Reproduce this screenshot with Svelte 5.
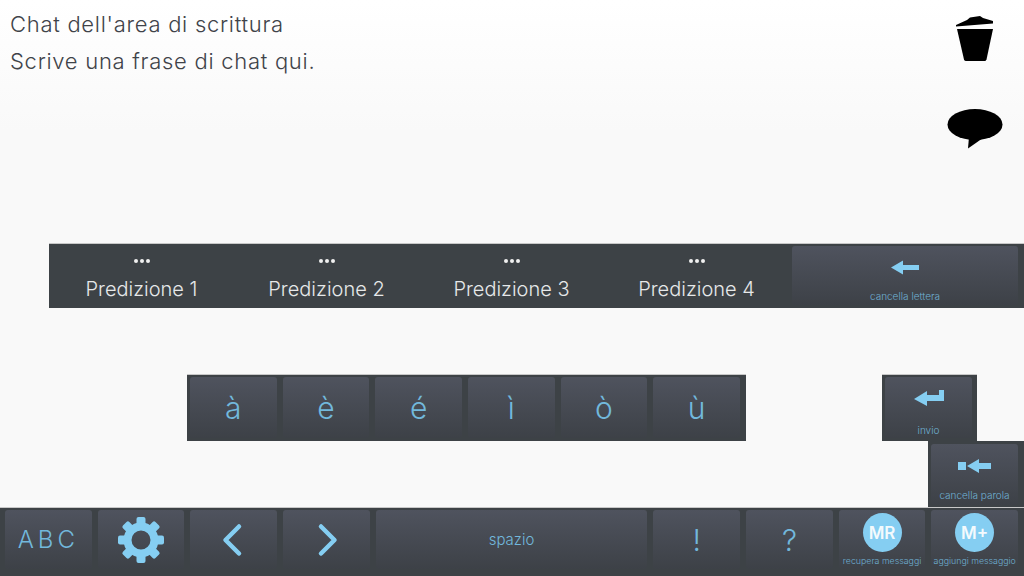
<script>
  const predictions = ['Predizione 1', 'Predizione 2', 'Predizione 3', 'Predizione 4'];
  const accents = ['à', 'è', 'é', 'ì', 'ò', 'ù'];
  const teeth = [0, 45, 90, 135, 180, 225, 270, 315];
</script>

<div class="page">
  <header class="top">
    <div class="message">
      <p>Chat dell'area di scrittura</p>
      <p>Scrive una frase di chat qui.</p>
    </div>
    <div class="actions">
      <svg width="38" height="48" viewBox="1 0 38 48" aria-label="cestino">
        <path d="M1 10 L12 5 L15 2.500 L25 1 L28 3 L38 6 L38 8.500 L1 11.500 Z" />
        <path d="M2 14 L38 14 L31.500 44.500 Q31 46 29.500 46 L11 46 Q9.500 46 9 44.500 Z" />
      </svg>
      <svg class="bubble" width="56" height="40" viewBox="0 0 56 40" aria-label="chat">
        <ellipse cx="28" cy="15.500" rx="27.500" ry="15.500" />
        <path d="M22 28 L21 39.500 L36 29 Z" />
      </svg>
    </div>
  </header>

  <section class="predictions">
    {#each predictions as label}
      <div class="prediction">
        <div class="dots"><i></i><i></i><i></i></div>
        <span>{label}</span>
      </div>
    {/each}
    <button class="key backspace">
      <svg width="30" height="16" viewBox="0 0 30 16">
        <path d="M1 7.500 L13 0.500 L13 5 L29 5 L29 10 L13 10 L13 14.500 Z" />
      </svg>
      <small>cancella lettera</small>
    </button>
  </section>

  <section class="middle">
    <div class="accents">
      {#each accents as letter}
        <button class="key letter">{letter}</button>
      {/each}
    </div>
    <div class="enter">
      <button class="key labelled">
        <svg width="30" height="17" viewBox="0 0 30 17">
          <path d="M0 9 L13 1 L13 5 L25 5 L25 0 L30 0 L30 11 L13 11 L13 16 Z" />
        </svg>
        <small>invio</small>
      </button>
    </div>
  </section>

  <section class="word">
    <button class="key labelled">
      <svg width="34" height="16" viewBox="0 0 34 16">
        <rect x="0" y="4" width="8" height="8" />
        <path d="M9 8 L21 1 L21 5 L33 5 L33 11 L21 11 L21 15 Z" />
      </svg>
      <small>cancella parola</small>
    </button>
  </section>

  <nav class="bottom">
    <button class="key letter abc">ABC</button>
    <button class="key">
      <svg width="48" height="48" viewBox="-24 -24 48 48" aria-label="impostazioni">
        {#each teeth as angle}
          <rect x="-4.500" y="-23" width="9" height="12" rx="2" transform="rotate({angle})" />
        {/each}
        <circle r="13.500" fill="none" stroke="#85cef2" stroke-width="8" />
      </svg>
    </button>
    <button class="key">
      <svg width="24" height="34" viewBox="0 0 24 34" aria-label="indietro">
        <path class="chevron" d="M17 3.500 L3.500 17 L17 30.500" />
      </svg>
    </button>
    <button class="key">
      <svg width="24" height="34" viewBox="0 0 24 34" aria-label="avanti">
        <path class="chevron" d="M7 3.500 L20.500 17 L7 30.500" />
      </svg>
    </button>
    <button class="key space">spazio</button>
    <button class="key letter">!</button>
    <button class="key letter">?</button>
    <button class="key memory">
      <span class="badge">MR</span>
      <small>recupera messaggi</small>
    </button>
    <button class="key memory">
      <span class="badge">M+</span>
      <small>aggiungi messaggio</small>
    </button>
  </nav>
</div>

<style>
  :global(body) {
    margin: 0;
    background: #f9f9f9;
  }

  .page {
    width: 1024px;
    height: 576px;
    overflow: hidden;
    display: flex;
    flex-direction: column;
    font-family: Inter, Lato, "Liberation Sans", sans-serif;
    background: linear-gradient(#ffffff 0, #f9f9f9 130px);
  }

  .top {
    height: 243px;
    flex: none;
    display: flex;
    justify-content: space-between;
    box-sizing: border-box;
    padding: 6px 21px 0 10px;
  }

  .message p {
    margin: 0;
    height: 37px;
    line-height: 36px;
    font-size: 22px;
    font-weight: 300;
    letter-spacing: 0.72px;
    color: #3f4349;
  }

  .actions {
    display: flex;
    flex-direction: column;
    align-items: center;
    padding-top: 9px;
  }

  .actions svg {
    display: block;
  }

  .bubble {
    margin-top: 46px;
  }

  .key {
    border: 0;
    padding: 0;
    margin: 0;
    border-radius: 3px;
    background: linear-gradient(#4f535e, #3d4147);
    color: #72b8dc;
    font-family: inherit;
    display: flex;
    flex-direction: column;
    align-items: center;
    justify-content: center;
    min-width: 0;
  }

  .key svg {
    fill: #85cef2;
    display: block;
  }

  .key small {
    font-size: 10px;
    font-weight: 300;
    color: #6fb0d2;
    white-space: nowrap;
  }

  .predictions {
    height: 65px;
    flex: none;
    margin-left: 49px;
    display: flex;
    box-sizing: border-box;
    padding: 2px 6px 3px 0;
    background: #3d4246;
    border-top: 1px solid #c8c8c8;
  }

  .prediction {
    width: 185px;
    flex: none;
    display: flex;
    flex-direction: column;
    align-items: center;
    color: #e6e8e9;
    font-size: 20px;
    font-weight: 300;
    padding-top: 13px;
  }

  .dots {
    display: flex;
    gap: 2px;
    height: 18px;
    box-sizing: border-box;
  }

  .dots i {
    width: 4px;
    height: 4px;
    border-radius: 50%;
    background: #f0f0f0;
  }

  .backspace {
    margin-left: 3px;
    flex: 1;
    justify-content: flex-start;
    padding-top: 14px;
  }

  .backspace small {
    margin-top: 14px;
  }

  .middle {
    height: 67px;
    flex: none;
    margin-top: 66px;
    display: flex;
    padding-left: 187px;
  }

  .accents {
    width: 559px;
    box-sizing: border-box;
    padding: 2px 6px 3px 3px;
    display: grid;
    grid-template-columns: repeat(6, 1fr);
    gap: 6px;
    background: #3d4246;
    border-top: 1px solid #c8c8c8;
  }

  .letter {
    font-size: 30px;
    font-weight: 300;
  }

  .enter {
    margin-left: 136px;
    width: 95px;
    box-sizing: border-box;
    padding: 2px 5px 3px 3px;
    display: flex;
    background: #3d4246;
    border-top: 1px solid #c8c8c8;
  }

  .labelled {
    flex: 1;
    justify-content: flex-start;
    padding-top: 13px;
  }

  .labelled small {
    margin-top: 17px;
  }

  .word {
    height: 66px;
    flex: none;
    align-self: flex-end;
    width: 96px;
    box-sizing: border-box;
    padding: 3px 6px 2px 3px;
    display: flex;
    background: #3d4246;
  }

  .word .labelled {
    padding-top: 14px;
  }

  .word .labelled small {
    margin-top: 15px;
  }

  .bottom {
    flex: 1;
    box-sizing: border-box;
    padding: 2px 6px 7px 5px;
    display: grid;
    grid-template-columns: repeat(11, 1fr);
    gap: 6px;
    background: #3d4246;
    border-top: 1px solid #c8c8c8;
  }

  .abc {
    font-size: 24px;
    letter-spacing: 4px;
  }

  .chevron {
    fill: none;
    stroke: #85cef2;
    stroke-width: 4.500;
    stroke-linecap: round;
    stroke-linejoin: round;
  }

  .space {
    grid-column: span 3;
    font-size: 15px;
    font-weight: 300;
  }

  .memory {
    justify-content: flex-start;
    padding-top: 3px;
    gap: 3px;
  }

  .memory small {
    font-size: 8.800px;
  }

  .badge {
    width: 39px;
    height: 39px;
    flex: none;
    border-radius: 50%;
    background: #85cef2;
    color: #f4fafd;
    font-size: 17px;
    font-weight: 600;
    display: flex;
    align-items: center;
    justify-content: center;
  }
</style>
